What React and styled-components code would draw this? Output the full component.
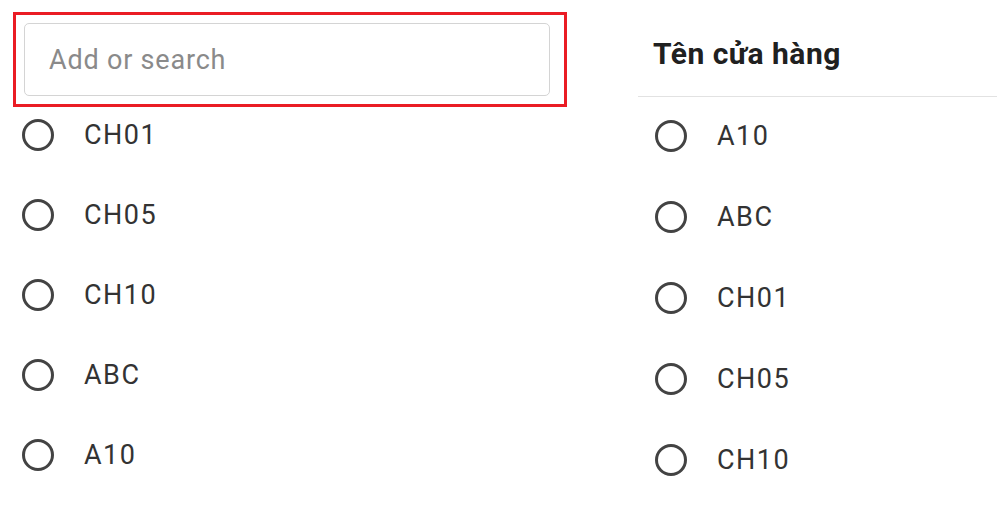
import styled, { createGlobalStyle } from "styled-components";

const GlobalStyle = createGlobalStyle`
	body {
		margin: 0;
		background: #ffffff;
		font-family: Roboto, "Noto Sans", sans-serif;
	}
`;

const Page = styled.div`
	display: flex;
	width: 999px;
	height: 516px;
	padding-left: 13px;
	box-sizing: border-box;
	gap: 71px;
	overflow: hidden;
`;

const Left = styled.div`
	width: 554px;
	display: flex;
	flex-direction: column;
	padding-top: 12px;
`;

const Highlight = styled.div`
	border: 3px solid #ea1c24;
	padding: 8px 14px 8px 8px;
`;

const SearchInput = styled.input`
	display: block;
	width: 100%;
	height: 73px;
	box-sizing: border-box;
	border: 1px solid #d4d4d4;
	border-radius: 5px;
	padding: 0 24px;
	font-family: Roboto, sans-serif;
	font-size: 27px;
	letter-spacing: 0.8px;
	color: #333;
	outline: none;
	&::placeholder {
		color: #8a8a8a;
	}
`;

const Right = styled.div`
	width: 359px;
	display: flex;
	flex-direction: column;
`;

const Heading = styled.div`
	height: 97px;
	box-sizing: border-box;
	display: flex;
	align-items: center;
	padding: 11px 0 0 15px;
	border-bottom: 1px solid #e2e2e2;
	font-size: 30px;
	letter-spacing: 0.5px;
	font-weight: 700;
	color: #202020;
`;

const List = styled.div`
	display: flex;
	flex-direction: column;
`;

const Row = styled.label`
	display: flex;
	align-items: flex-start;
	gap: 30px;
	height: ${(p) => p.$h}px;
	box-sizing: border-box;
	padding: ${(p) => p.$top}px 0 0 ${(p) => p.$left}px;
	font-size: 27px;
	color: #333;
	cursor: pointer;
`;

const Circle = styled.span`
	width: 32px;
	height: 32px;
	box-sizing: border-box;
	border: 3px solid #434343;
	border-radius: 50%;
	flex-shrink: 0;
`;

const Label = styled.span`
	line-height: 32px;
	letter-spacing: 1.5px;
`;

const leftItems = ["CH01", "CH05", "CH10", "ABC", "A10"];
const rightItems = ["A10", "ABC", "CH01", "CH05", "CH10"];

export default function App() {
	return (
		<>
			<GlobalStyle />
			<Page>
				<Left>
					<Highlight>
						<SearchInput placeholder="Add or search" />
					</Highlight>
					<List>
						{leftItems.map((item) => (
							<Row key={item} $h={80} $top={12} $left={9}>
								<Circle />
								<Label>{item}</Label>
							</Row>
						))}
					</List>
				</Left>
				<Right>
					<Heading>Tên cửa hàng</Heading>
					<List>
						{rightItems.map((item) => (
							<Row key={item} $h={81} $top={23} $left={17}>
								<Circle />
								<Label>{item}</Label>
							</Row>
						))}
					</List>
				</Right>
			</Page>
		</>
	);
}
